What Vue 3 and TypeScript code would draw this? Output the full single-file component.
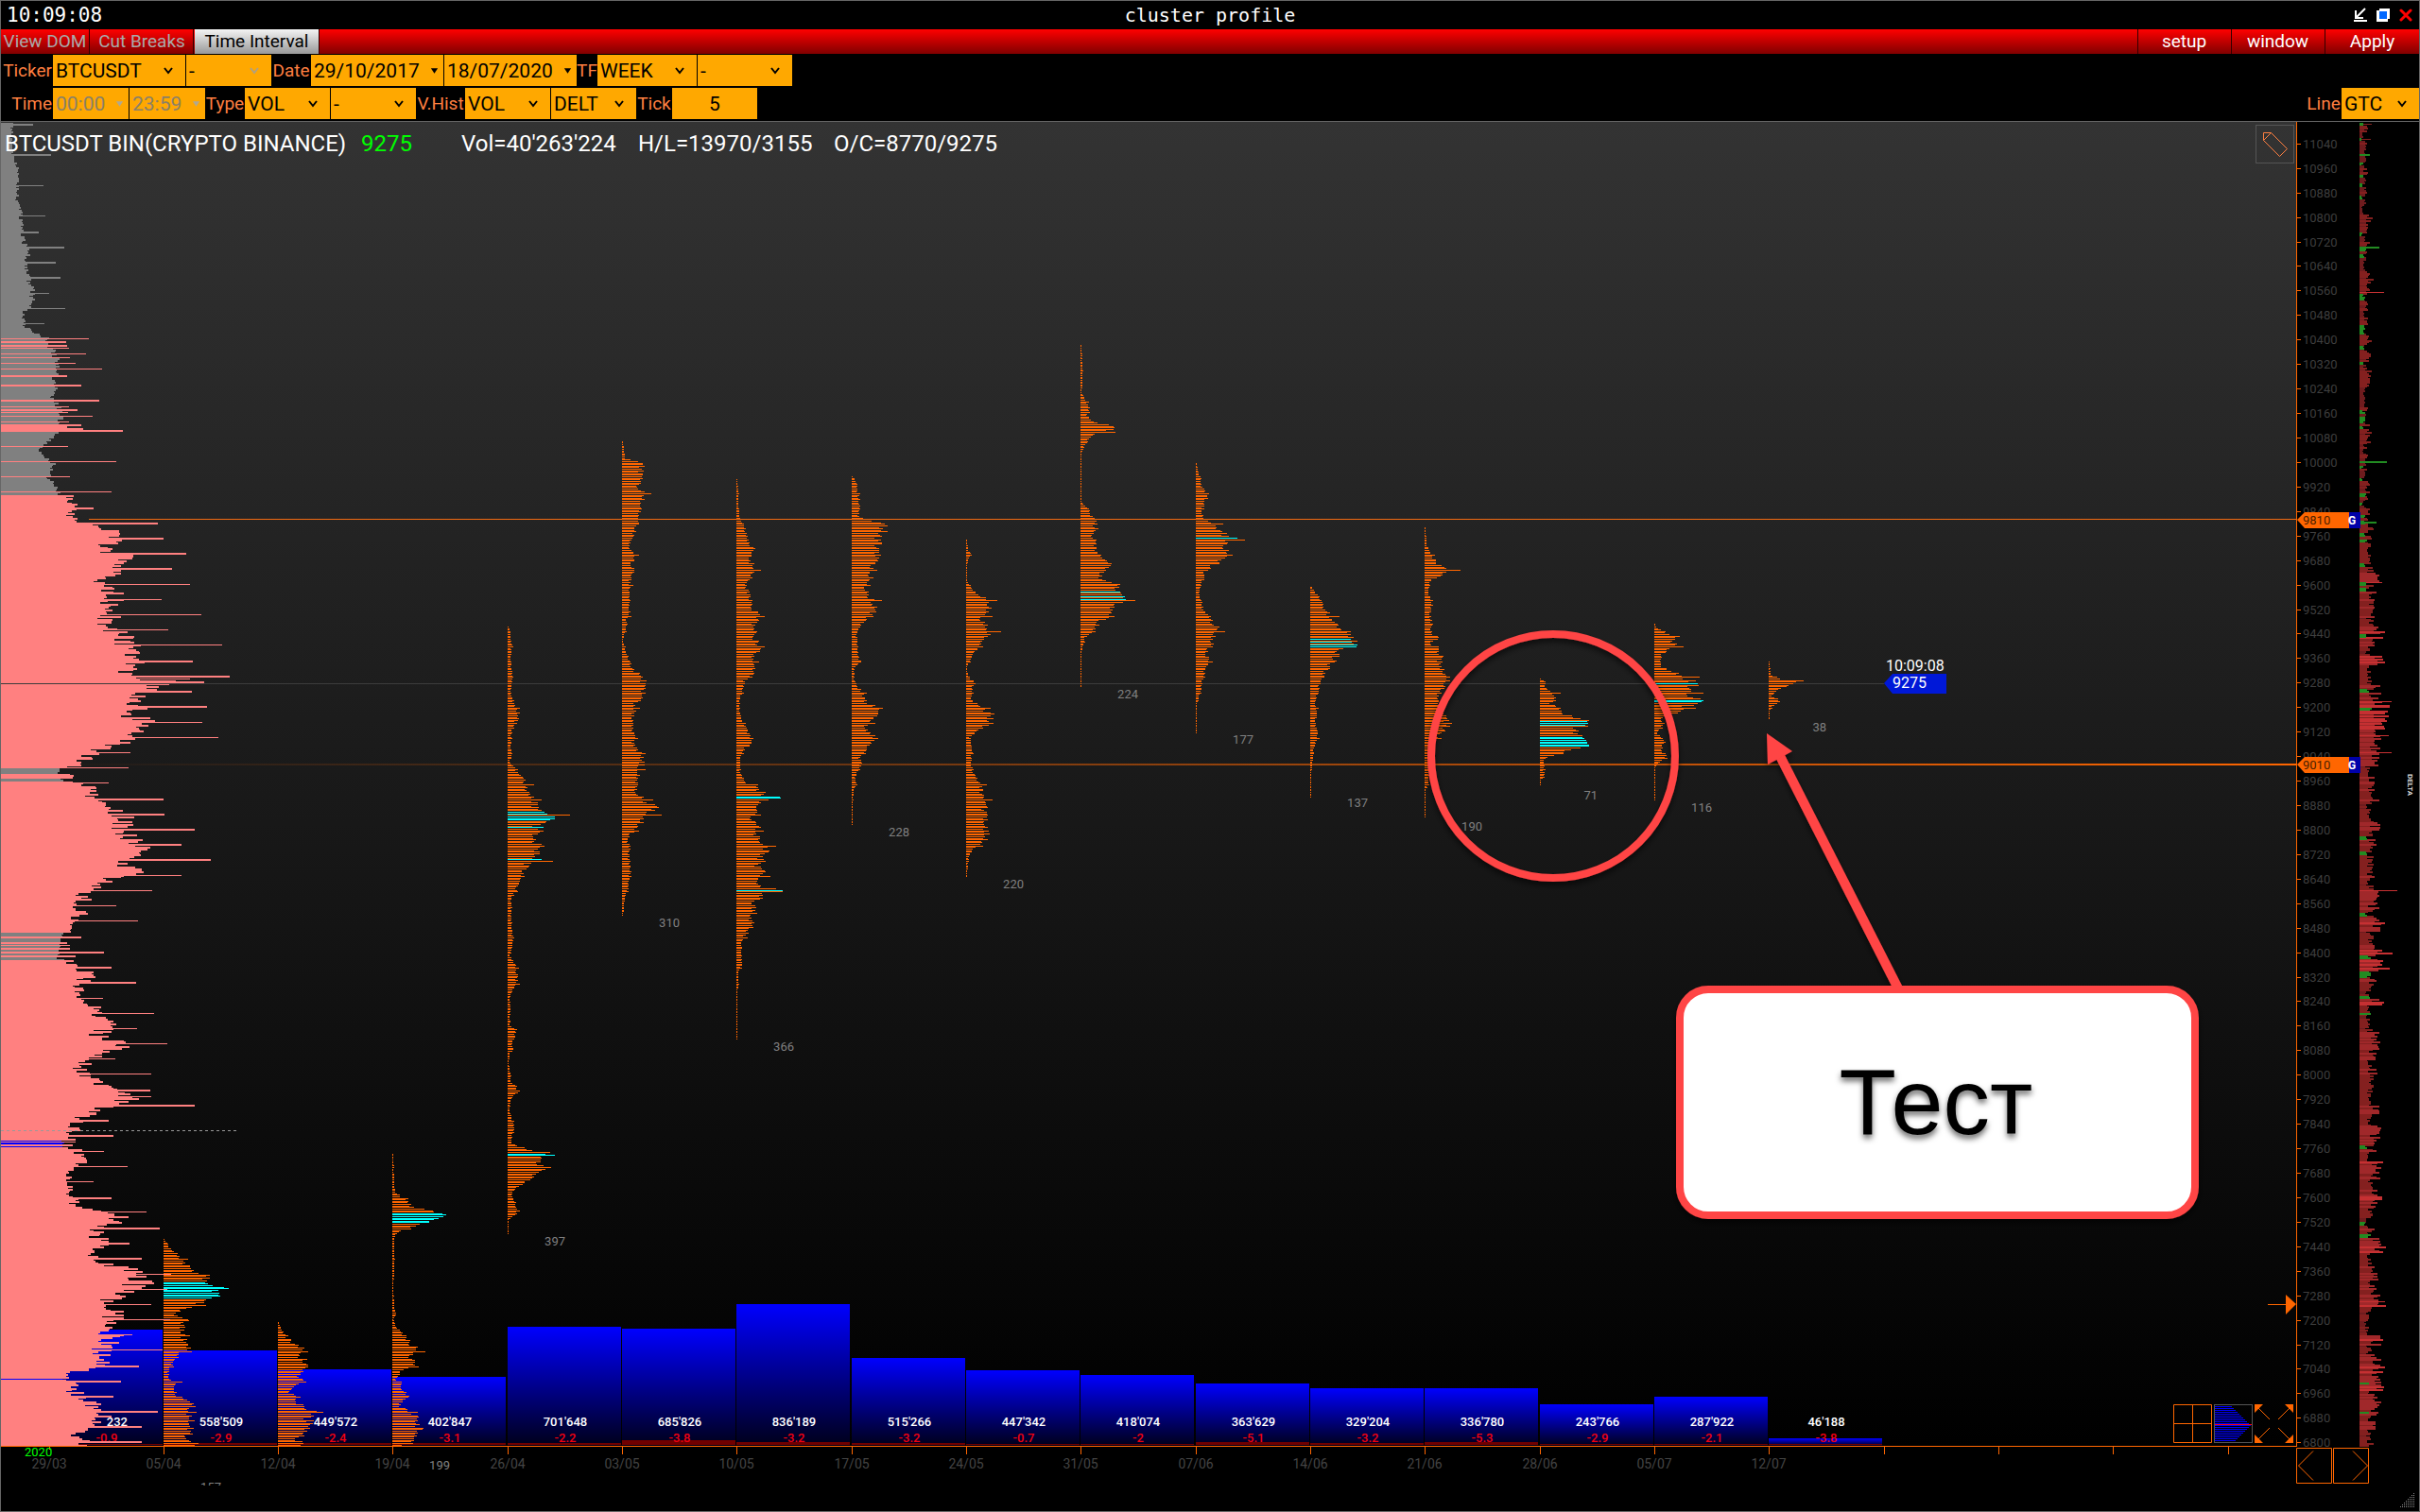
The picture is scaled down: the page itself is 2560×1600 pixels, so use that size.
<script setup lang="ts">
import { ref } from 'vue'

type Point = [number, number]
interface Column {
  date: string
  volume: string
  delta: string
  top: number
  strip: number
  count: string
  countY: number
  shape: Point[]
  hot: [number, number][]
}

const FIRST_X = 172.6
const STEP = 121.34
const BASE_Y = 1530
const TOP_Y = 129
const ROW = 1.6209

const ticker = ref('BTCUSDT')
const dateFrom = ref('29/10/2017')
const dateTo = ref('18/07/2020')
const timeFrom = ref('00:00')
const timeTo = ref('23:59')
const tick = ref('5')

const priceY = (price: number): number => 1526.3 - ((price - 6800) / 5) * ROW
const colX = (k: number): number => Math.round(FIRST_X + STEP * k)

function noise(n: number): number {
  const v = Math.sin(n * 12.9898 + 4.1) * 43758.5453
  return v - Math.floor(v)
}

function sample(points: Point[], y: number): number {
  for (let i = 1; i < points.length; i++) {
    const [y0, w0] = points[i - 1]
    const [y1, w1] = points[i]
    if (y <= y1) return w0 + ((w1 - w0) * Math.max(0, y - y0)) / (y1 - y0)
  }
  return points[points.length - 1][1]
}

function parse(text: string): Point[] {
  return text.trim().split(/\s+/).map((p) => p.split(':').map(Number) as Point)
}

const bar = (x: number, y: number, w: number, h = 1): string => `M${x} ${y}h${w}v${h}h${-w}z`

const columns: Column[] = [
  { date: '05/04', volume: "558'509", delta: '-2.9', top: 1429, strip: 2, count: '157', countY: 1578, hot: [[1356, 1374]],
    shape: parse('1311:1 1320:7 1330:17 1335:20 1341:28 1348:40 1356:44 1360:50 1363:68 1366:50 1369:62 1373:52 1375:38 1380:36 1385:22 1390:10 1395:22 1402:20 1410:20 1418:23 1428:25 1432:15 1436:14 1440:12 1445:8 1450:5 1458:5 1462:13 1467:10 1472:12 1478:15 1483:31 1490:28 1500:30 1510:27 1518:26 1523:22 1530:36') },
  { date: '12/04', volume: "449'572", delta: '-2.4', top: 1449, strip: 2, count: '', countY: 0, hot: [],
    shape: parse('1398:1 1406:3 1412:7 1420:15 1428:27 1436:25 1443:32 1449:26 1455:20 1460:25 1465:18 1472:10 1476:20 1483:18 1488:30 1493:36 1500:32 1507:35 1513:28 1518:25 1523:20 1530:27') },
  { date: '19/04', volume: "402'847", delta: '-3.1', top: 1457, strip: 2, count: '199', countY: 1555, hot: [[1283, 1293]],
    shape: parse('1221:1 1255:2 1262:4 1268:12 1275:18 1280:33 1285:55 1290:45 1296:28 1300:15 1304:5 1310:2 1340:2 1360:1 1385:2 1390:5 1395:1 1403:3 1410:10 1420:18 1428:26 1436:20 1443:27 1450:8 1455:8 1459:3 1462:8 1470:10 1476:17 1482:10 1488:8 1493:18 1498:28 1503:25 1510:28 1518:27 1525:20 1530:8') },
  { date: '26/04', volume: "701'648", delta: '-2.2', top: 1404, strip: 2, count: '397', countY: 1318, hot: [[859, 861], [863, 867], [875, 876], [909, 910], [1221, 1223]],
    shape: parse('662:1 670:3 684:4 700:3 717:5 735:3 745:8 757:12 765:8 775:4 790:3 800:4 806:2 812:7 820:14 830:20 840:22 850:28 857:32 862:44 866:50 869:38 874:32 876:42 878:30 888:30 900:33 908:28 910:42 912:22 920:17 930:13 940:10 950:4 960:4 975:3 985:5 995:5 1003:5 1010:2 1020:8 1030:10 1040:9 1048:5 1055:2 1065:3 1075:2 1085:3 1090:8 1100:6 1105:4 1110:6 1115:2 1125:1 1135:3 1145:3 1150:10 1155:12 1160:5 1165:3 1175:2 1185:5 1195:7 1203:4 1210:5 1215:20 1220:32 1222:47 1225:35 1230:33 1235:38 1240:30 1245:25 1252:15 1258:8 1265:4 1272:8 1280:12 1285:8 1290:1 1305:1') },
  { date: '03/05', volume: "685'826", delta: '-3.8', top: 1406, strip: 5, count: '310', countY: 981, hot: [],
    shape: parse('466:1 478:2 485:3 488:20 495:21 505:18 515:18 520:24 530:20 545:18 550:17 565:12 575:7 580:8 588:14 595:10 603:12 612:9 620:8 630:8 640:7 650:8 655:4 662:5 670:3 678:1 690:4 700:8 708:12 714:19 720:22 730:22 738:20 745:14 755:12 765:10 775:12 785:12 795:17 805:22 815:18 825:15 835:14 845:22 850:28 855:36 860:30 866:24 873:18 878:15 882:8 890:6 900:8 910:7 920:9 930:7 940:6 950:3 968:1') },
  { date: '10/05', volume: "836'189", delta: '-3.2', top: 1380, strip: 3, count: '366', countY: 1112, hot: [[843, 844], [941, 942]],
    shape: parse('507:1 520:2 535:2 545:3 553:6 562:10 572:12 580:18 590:14 600:18 610:16 618:10 625:12 635:15 645:18 652:24 660:18 670:20 680:20 688:24 695:16 705:18 712:18 720:8 728:8 740:3 750:3 760:5 770:10 780:16 785:17 792:8 802:4 815:4 822:6 828:12 835:24 841:30 843:45 844:45 846:26 858:22 865:14 872:25 880:18 890:28 900:32 905:28 915:22 922:28 930:24 939:26 941:49 942:49 944:26 950:24 955:17 965:20 970:15 978:17 985:12 995:6 1005:5 1015:5 1022:6 1028:2 1040:2 1050:1 1099:1') },
  { date: '17/05', volume: "515'266", delta: '-3.2', top: 1437, strip: 2, count: '228', countY: 885, hot: [],
    shape: parse('503:1 512:5 520:6 530:8 540:7 547:8 550:18 555:35 560:36 565:28 570:27 580:29 590:25 600:22 610:20 620:15 630:18 640:25 648:22 655:15 662:8 670:5 678:5 690:7 700:9 706:3 715:2 725:5 733:12 742:14 748:26 755:25 762:18 772:15 780:23 788:17 795:14 800:8 808:10 815:8 820:4 830:4 835:2 850:1 872:1') },
  { date: '24/05', volume: "447'342", delta: '-0.7', top: 1450, strip: 1, count: '220', countY: 940, hot: [],
    shape: parse('571:1 582:2 586:6 592:2 600:1 615:1 620:4 628:10 634:25 640:26 648:22 655:16 662:22 668:26 676:18 684:16 690:8 697:5 705:1 715:2 722:9 732:6 740:5 746:15 752:22 757:28 765:24 772:12 780:4 795:6 805:5 815:7 822:10 830:18 838:16 850:20 860:20 870:20 880:22 888:20 892:16 900:6 910:2 928:1') },
  { date: '31/05', volume: "418'074", delta: '-2', top: 1455, strip: 1, count: '224', countY: 739, hot: [[625, 626], [630, 631], [633, 634]],
    shape: parse('364:1 390:2 400:2 415:1 422:5 430:8 435:9 440:6 445:12 449:28 453:33 456:31 460:12 466:8 472:3 480:1 505:1 530:1 537:6 545:12 550:15 556:14 560:18 566:12 575:15 582:15 590:20 595:30 600:28 606:20 612:20 617:35 622:38 628:42 634:46 638:36 643:36 650:27 655:24 660:18 668:12 674:5 680:4 684:2 690:1 727:1') },
  { date: '07/06', volume: "363'629", delta: '-5.1', top: 1464, strip: 3, count: '177', countY: 787, hot: [[568, 569]],
    shape: parse('489:1 497:2 507:5 515:6 520:10 525:12 532:8 540:6 548:7 552:18 560:24 566:32 568:42 569:42 572:35 578:31 584:33 590:28 594:28 598:18 605:8 612:8 620:4 628:3 638:6 645:8 652:14 660:20 668:24 675:18 683:16 690:10 700:14 706:10 715:8 722:6 730:5 738:3 745:1 775:1') },
  { date: '14/06', volume: "329'204", delta: '-3.2', top: 1469, strip: 2, count: '137', countY: 854, hot: [[675, 676], [679, 680], [682, 684]],
    shape: parse('620:1 625:4 633:10 640:13 648:18 655:24 662:30 668:33 674:40 680:46 684:50 688:32 695:27 705:20 715:14 722:12 730:8 738:6 745:5 755:7 765:4 775:8 785:6 792:3 800:3 820:1 843:1') },
  { date: '21/06', volume: "336'780", delta: '-5.3', top: 1469, strip: 3, count: '190', countY: 879, hot: [],
    shape: parse('558:1 575:2 582:5 590:9 597:15 603:29 608:18 615:5 625:4 640:8 650:5 660:8 667:6 675:14 680:5 685:12 692:18 700:15 710:20 718:26 724:22 732:15 742:14 750:15 760:22 766:26 774:18 780:14 790:5 800:4 810:4 820:5 830:4 835:1 865:1') },
  { date: '28/06', volume: "243'766", delta: '-2.9', top: 1486, strip: 1, count: '71', countY: 846, hot: [[763, 767], [779, 789]],
    shape: parse('718:1 722:6 728:6 732:14 738:20 744:12 750:18 757:30 763:48 767:49 771:35 776:38 780:45 785:50 790:50 793:35 797:20 802:5 808:4 815:4 822:4 826:1 831:1') },
  { date: '05/07', volume: "287'922", delta: '-2.1', top: 1478, strip: 1, count: '116', countY: 859, hot: [[722, 724], [740, 743]],
    shape: parse('659:1 664:2 668:10 673:24 678:18 683:22 688:14 692:8 700:6 706:8 709:18 714:28 719:38 723:45 728:34 735:36 740:52 743:47 748:30 753:24 760:8 770:8 775:3 785:10 795:8 802:14 806:5 812:1 847:1') },
  { date: '12/07', volume: "46'188", delta: '-3.8', top: 1522, strip: 1, count: '38', countY: 774, hot: [],
    shape: parse('700:1 710:2 714:3 718:12 720:32 722:36 724:20 728:14 733:5 736:3 740:10 743:12 747:3 755:1 761:1') },
]

const rows: { i: number; y: number }[] = []
for (let i = 0; i < 900; i++) {
  const y = Math.round(1528.5 - i * ROW)
  if (y < TOP_Y) break
  rows.push({ i, y })
}

/* Weekly clusters, one bar per five points of price */
const profiles = columns.map((c, k) => {
  const x = colX(k)
  let plain = ''
  let hot = ''
  const first = c.shape[0][0]
  const last = c.shape[c.shape.length - 1][0]
  for (const { i, y } of rows) {
    if (y < first || y > last) continue
    const isHot = c.hot.some(([a, b]) => y >= a && y <= b)
    const base = sample(c.shape, y)
    const round = i % 10 === 1 && !isHot ? 1.3 : 1
    const w = Math.max(1, Math.round(base * round * (isHot ? 0.97 + noise(i + k * 977) * 0.1 : 0.82 + noise(i + k * 977) * 0.36)))
    if (isHot) hot += bar(x, y, w)
    else plain += bar(x, y, w)
  }
  return { plain, hot }
})

/* Total volume by price */
const totalShape = parse(
  '128:16 135:13 165:14 180:20 200:19 215:19 222:22 240:24 255:25 262:33 275:29 290:31 300:34 310:37 320:34 332:25 345:28 352:42 356:52 370:60 390:62 400:58 410:62 420:55 430:64 450:66 458:62 465:52 476:42 490:58 505:52 515:62 522:64 524:75 535:78 545:76 550:88 556:118 570:122 580:115 590:138 600:135 610:118 618:112 625:125 640:122 665:118 668:142 680:140 690:150 700:145 710:145 718:170 722:188 726:158 745:152 755:148 765:155 775:150 785:140 792:115 800:95 806:85 809:80 811:64 816:66 818:74 822:75 824:66 826:67 828:92 840:105 850:108 855:122 865:135 880:138 890:150 900:150 910:138 920:150 927:135 935:105 945:92 955:90 965:88 975:82 985:78 988:65 1014:64 1016:74 1022:90 1030:100 1040:92 1050:80 1055:78 1065:100 1075:115 1085:115 1095:110 1105:130 1112:122 1120:93 1130:90 1137:92 1145:115 1155:130 1165:142 1170:120 1180:96 1185:82 1195:86 1198:76 1200:66 1213:68 1215:80 1222:98 1230:90 1235:80 1245:75 1255:77 1265:74 1272:85 1280:100 1285:128 1295:120 1300:108 1310:110 1315:115 1325:105 1335:110 1343:140 1355:155 1365:140 1375:120 1382:125 1395:125 1402:108 1408:120 1415:125 1425:112 1440:120 1446:110 1450:80 1457:73 1459:69 1461:76 1470:80 1480:90 1490:112 1500:118 1510:100 1518:85 1525:92 1530:100',
)
const peaks = parse(
  '131:35 163:54 196:46 228:48 245:41 261:68 277:59 293:64 310:52 326:69 342:47 358:94 361:70 365:71 368:73 374:91 378:74 384:80 390:108 397:71 407:86 423:105 430:73 433:82 436:72 440:98 446:73 449:86 451:71 453:88 455:130 472:72 488:123 504:74 520:118 537:99 553:167 569:173 585:197 601:182 618:201 634:171 650:213 666:178 682:235 699:204 715:243 718:201 721:216 731:203 747:219 764:214 780:231 796:138 812:136 828:115 845:173 861:174 877:206 893:192 909:223 926:192 942:161 958:123 974:146 991:86 997:71 1000:74 1003:74 1007:110 1011:80 1023:118 1039:144 1056:109 1072:163 1088:145 1104:177 1120:122 1136:160 1153:159 1160:160 1169:206 1185:115 1201:120 1203:72 1205:80 1208:80 1211:77 1218:110 1234:135 1250:99 1267:118 1282:155 1299:169 1315:137 1331:150 1348:181 1364:177 1380:160 1396:180 1412:140 1428:172 1445:147 1461:128 1477:120 1493:167 1509:150 1525:150',
)
const total = (() => {
  const out = { gray: '', pink: '', blue: '' }
  const paint = (y: number, w: number, h: number): void => {
    const key = w >= 70 ? 'pink' : y > 1190 ? 'blue' : 'gray'
    out[key] += bar(1, y, w - 1, h)
  }
  for (const { i, y } of rows) {
    const base = sample(totalShape, y)
    const swing = base < 70 && y > 380 ? 0.06 : 0.14
    let w = Math.round(base * (1 - swing / 2 + (noise(i * 3.7) - 0.35) * swing * 1.6))
    if (base < 70) w = Math.min(w, 69)
    if (base >= 72) w = Math.max(w, 70)
    paint(y, w, 2)
  }
  return out
})()
const peakPath = (() => {
  let gray = ''
  let pink = ''
  peaks.forEach(([y, w]) => {
    if (w >= 70) pink += bar(1, y, w - 1, 1 + (y % 2))
    else gray += bar(1, y, w - 1, 1 + (y % 2))
  })
  return { gray, pink }
})()

/* Delta by price, brighter as the imbalance grows */
const deltaShape = parse('129:9 200:9 300:13 400:12 530:12 580:18 620:23 660:21 700:24 730:30 755:28 790:26 824:16 850:20 870:22 900:24 1000:26 1100:22 1200:23 1300:24 1365:28 1400:20 1450:26 1490:20 1530:20')
const deltaPeaks: [number, number, boolean][] = [[131, 13, false], [147, 12, false], [163, 11, true], [261, 21, true], [309, 26, false], [488, 29, true], [552, 18, true], [616, 24, false], [742, 34, false], [746, 32, false], [778, 31, false], [796, 34, false], [942, 40, false], [1072, 12, true], [1377, 27, false], [1463, 10, true], [1494, 10, true]]
const deltaBars = (() => {
  const tones = ['', '', '', '']
  let green = ''
  for (const { i, y } of rows) {
    const wave = 0.4 + noise(Math.floor(i / 6) * 5.3) * 0.6
    const isGreen = noise(Math.floor(i / 2) * 9.1) < (y < 580 ? 0.22 : 0.07)
    const w = Math.max(2, Math.round(sample(deltaShape, y) * wave * (0.55 + noise(i * 2.3) * 0.6) * (i % 10 === 1 ? 1.3 : 1)))
    if (isGreen) green += bar(2496, y, Math.max(2, Math.round(w * 0.5)), 2)
    else tones[Math.min(3, Math.floor(w / 8))] += bar(2496, y, w, 2)
  }
  for (const [y, w, isGreen] of deltaPeaks) {
    if (isGreen) green += bar(2496, y, w, 2)
    else tones[Math.min(3, Math.floor(w / 8))] += bar(2496, y, w, 1)
  }
  return { tones, green }
})()
const deltaTones = ['#6e1c1e', '#84201f', '#a0282a', '#c63032']

const priceLabels = Array.from({ length: 54 }, (_, n) => 6800 + n * 80)
const timeTicks = Array.from({ length: 19 }, (_, k) => k)
const miniRows = Array.from({ length: 19 }, (_, n) => ({ y: 2 + n * 2, w: 38 - Math.abs(n - 10) * 2 }))
const gripDots = Array.from({ length: 8 }, (_, r) => Array.from({ length: r + 1 }, (_, c) => ({ x: 2553 - c * 2, y: 1580 + r * 2 }))).flat()
</script>

<template>
  <main class="window">
    <header class="titlebar">
      <time class="clock">10:09:08</time>
      <h1>cluster profile</h1>
      <div class="window-buttons">
        <button type="button" aria-label="Minimize">
          <svg viewBox="0 0 16 16"><path d="M13 1 4 10M3 3v8h8" fill="none" stroke="#fff" stroke-width="2" /><path d="M1 14h14" stroke="#fff" stroke-width="2" /></svg>
        </button>
        <button type="button" aria-label="Restore">
          <svg viewBox="0 0 16 16"><path d="M4 1h11v11h-2v3H1V3h3z" fill="#fff" /><path d="M4 4h8v8H4z" fill="#0068ff" /></svg>
        </button>
        <button type="button" aria-label="Close">
          <svg viewBox="0 0 16 16"><path d="m3 3 10 10M13 3 3 13" fill="none" stroke="red" stroke-width="3" stroke-linecap="round" /></svg>
        </button>
      </div>
    </header>

    <nav class="menu">
      <button type="button" class="dim view">View DOM</button>
      <button type="button" class="dim cut">Cut Breaks</button>
      <button type="button" class="active">Time Interval</button>
      <span class="spring"></span>
      <button type="button" class="side">setup</button>
      <button type="button" class="side">window</button>
      <button type="button" class="side">Apply</button>
    </nav>

    <section class="controls">
      <div class="row">
        <label class="lead" for="ticker">Ticker</label>
        <span class="pick w140"><select id="ticker" v-model="ticker"><option>BTCUSDT</option></select><svg viewBox="0 0 10 8"><path d="m1 1 4 5 4-5" /></svg></span>
        <span class="pick w90 faded"><select aria-label="Second ticker"><option>-</option></select><svg viewBox="0 0 10 8"><path d="m1 1 4 5 4-5" /></svg></span>
        <label class="w40" for="from">Date</label>
        <span class="pick date w140"><input id="from" v-model="dateFrom" type="text"><svg viewBox="0 0 10 8"><path d="M1 1h8L5 7z" /></svg></span>
        <span class="pick date w140"><input v-model="dateTo" type="text" aria-label="End date"><svg viewBox="0 0 10 8"><path d="M1 1h8L5 7z" /></svg></span>
        <label class="w20" for="frame">TF</label>
        <span class="pick w105"><select id="frame"><option>WEEK</option></select><svg viewBox="0 0 10 8"><path d="m1 1 4 5 4-5" /></svg></span>
        <span class="pick w100"><select aria-label="Second time frame"><option>-</option></select><svg viewBox="0 0 10 8"><path d="m1 1 4 5 4-5" /></svg></span>
      </div>
      <div class="row">
        <label class="lead" for="tfrom">Time</label>
        <span class="pick date w80 off"><input id="tfrom" v-model="timeFrom" type="text" disabled><svg viewBox="0 0 10 8"><path d="M1 1h8L5 7z" /></svg></span>
        <span class="pick date w80 off"><input v-model="timeTo" type="text" disabled aria-label="End time"><svg viewBox="0 0 10 8"><path d="M1 1h8L5 7z" /></svg></span>
        <label class="w40" for="type">Type</label>
        <span class="pick w90"><select id="type"><option>VOL</option></select><svg viewBox="0 0 10 8"><path d="m1 1 4 5 4-5" /></svg></span>
        <span class="pick w90"><select aria-label="Second type"><option>-</option></select><svg viewBox="0 0 10 8"><path d="m1 1 4 5 4-5" /></svg></span>
        <label class="w50" for="hist">V.Hist</label>
        <span class="pick w90"><select id="hist"><option>VOL</option></select><svg viewBox="0 0 10 8"><path d="m1 1 4 5 4-5" /></svg></span>
        <span class="pick w90"><select aria-label="Second histogram"><option>DELT</option></select><svg viewBox="0 0 10 8"><path d="m1 1 4 5 4-5" /></svg></span>
        <label class="w36" for="tick">Tick</label>
        <span class="pick w90"><input id="tick" v-model="tick" class="center" type="text"></span>
        <span class="spring"></span>
        <label class="w36" for="line">Line</label>
        <span class="pick w82"><select id="line"><option>GTC</option></select><svg viewBox="0 0 10 8"><path d="m1 1 4 5 4-5" /></svg></span>
      </div>
    </section>

    <section class="stage">
      <svg class="chart" viewBox="1 129 2558 1470" role="img" aria-label="BTCUSDT cluster profile">
        <defs>
          <linearGradient id="back" x1="0" y1="0" x2="0" y2="1"><stop offset="0" stop-color="#333" /><stop offset="1" stop-color="#000" /></linearGradient>
          <linearGradient id="volume" x1="0" y1="0" x2="0" y2="1"><stop offset="0" stop-color="#00f" /><stop offset="1" stop-color="#00001a" /></linearGradient>
          <linearGradient id="level" gradientUnits="userSpaceOnUse" x1="78" y1="0" x2="2429" y2="0"><stop offset="0" stop-color="#f60" stop-opacity="0.02" /><stop offset="1" stop-color="#f60" /></linearGradient>
          <filter id="shadow" x="-20%" y="-20%" width="140%" height="140%"><feDropShadow dx="0" dy="4" stdDeviation="3" flood-color="#000" flood-opacity="0.6" /></filter>
          <clipPath id="footer"><rect x="0" y="129" width="2560" height="1443" /></clipPath>
        </defs>
        <g shape-rendering="crispEdges">
          <rect x="1" y="129" width="2428" height="1401" fill="url(#back)" />
          <rect x="1" y="723" width="1992" height="1" fill="#3c3c3c" />
          <rect x="52" y="1407" width="120" height="123" fill="url(#volume)" />
          <rect x="52" y="1528" width="120" height="1" fill="#700000" />
          <g v-for="(c, k) in columns" :key="c.date">
            <rect :x="colX(k)" :y="c.top" width="120" :height="BASE_Y - c.top" fill="url(#volume)" />
            <rect :x="colX(k)" :y="1529 - c.strip" width="120" :height="c.strip" fill="#700000" />
          </g>
        </g>

        <g class="volumes">
          <text x="135" y="1509" text-anchor="end" class="cut-off">232</text>
          <text x="113" y="1526" class="minus">-0.9</text>
        </g>
        <g shape-rendering="crispEdges">
          <rect x="78" y="808" width="2351" height="2" fill="url(#level)" />
          <g v-for="(p, k) in profiles" :key="k">
            <path :d="p.plain" fill="#f60" />
            <path :d="p.hot" fill="#0ff" />
          </g>
          <rect x="94" y="549" width="2335" height="1" fill="#f26a12" />
          <path :d="total.gray" fill="#808080" />
          <path :d="total.blue" fill="#00f" />
          <path :d="total.pink" fill="#ff8080" />
          <path :d="peakPath.gray" fill="#808080" />
          <path :d="peakPath.pink" fill="#ff8080" />
          <rect x="1" y="723" width="180" height="1" fill="#3c3c3c" />
          <path d="M1 1196.500h250" stroke="#999" stroke-dasharray="3 3" />
        </g>
        <g class="volumes">
          <template v-for="(c, k) in columns" :key="c.date">
            <text :x="colX(k) + 61" y="1509">{{ c.volume }}</text>
            <text :x="colX(k) + 61" y="1526" class="minus">{{ c.delta }}</text>
          </template>
        </g>
        <g class="counts" clip-path="url(#footer)">
          <text v-for="(c, k) in columns" :key="c.date" :x="colX(k) + 61" :y="c.countY">{{ c.count }}</text>
        </g>

        <g shape-rendering="crispEdges" fill="#f60">
          <rect x="1" y="1530" width="2429" height="1" />
          <rect x="2429" y="129" width="1" height="1401" />
          <rect x="52" y="1530" width="1" height="4" />
          <rect v-for="k in timeTicks" :key="k" :x="colX(k)" y="1531" width="1" height="8" />
          <rect v-for="p in priceLabels" :key="p" x="2430" :y="Math.round(priceY(p))" width="4" height="1" />
        </g>
        <g class="dates">
          <text x="52" y="1554">29/03</text>
          <text v-for="(c, k) in columns" :key="c.date" :x="colX(k)" y="1554">{{ c.date }}</text>
        </g>
        <text x="26" y="1541" class="year">2020</text>
        <g class="prices">
          <text v-for="p in priceLabels" :key="p" x="2436" :y="Math.round(priceY(p)) + 5">{{ p }}</text>
        </g>

        <g shape-rendering="crispEdges">
          <path v-for="(d, n) in deltaBars.tones" :key="n" :d="d" :fill="deltaTones[n]" />
          <path :d="deltaBars.green" fill="#228b22" />
        </g>
        <text class="delta" transform="translate(2547 819) rotate(90)">DELTA</text>

        <g v-for="tag in [{ y: 542, p: '9810' }, { y: 801, p: '9010' }]" :key="tag.p" class="tag">
          <path :d="`M2430 ${tag.y + 8}l8-8h47v17h-47z`" fill="#f60" />
          <rect x="2485" :y="tag.y" width="12" height="17" fill="#00a" />
          <text x="2436" :y="tag.y + 13">{{ tag.p }}</text>
          <text x="2484" :y="tag.y + 13" class="g">G</text>
        </g>

        <path d="M2399 1380.500h20" stroke="#f60" /><path d="m2418 1370 11 10-11 11z" fill="#f60" />
        <text x="1995" y="710" class="now">10:09:08</text>
        <path d="m1993 723 9-10h57v21h-57z" fill="#0018d8" />
        <text x="2002" y="728" class="now">9275</text>

        <g class="headline">
          <text x="5" y="160">BTCUSDT BIN(CRYPTO BINANCE)</text>
          <text x="382" y="160" class="last">9275</text>
          <text x="488" y="160">Vol=40'263'224</text>
          <text x="675" y="160">H/L=13970/3155</text>
          <text x="882" y="160">O/C=8770/9275</text>
        </g>

        <g filter="url(#shadow)">
          <circle cx="1643" cy="800" r="129" fill="none" stroke="#ff4444" stroke-width="8" />
          <path d="M1883 800 2009 1048" stroke="#ff4444" stroke-width="10" />
          <path d="m1869 776 27 19-26 14z" fill="#ff4444" />
          <rect x="1777" y="1047" width="545" height="239" rx="30" fill="#fff" stroke="#ff4444" stroke-width="8" />
        </g>
        <text x="2048" y="1200" class="note">Тест</text>
        <g fill="#8c8c8c" shape-rendering="crispEdges">
          <rect v-for="(d, n) in gripDots" :key="n" :x="d.x" :y="d.y" width="1" height="1" />
        </g>
      </svg>

      <button type="button" class="tool marker" aria-label="Marker">
        <svg viewBox="0 0 41 41"><rect x="0.500" y="0.500" width="40" height="40" fill="none" stroke="#555" /><path d="M8.500 8.500h8l17 17-8 8-17-17zM8.500 16.500l8-8" fill="none" stroke="#ff7f40" /></svg>
      </button>
      <div class="tools">
        <button type="button" class="tool" aria-label="Grid">
          <svg viewBox="0 0 41 41"><path d="M.5.5h40v40H.5zM20.500 0v41M0 20.500h41" fill="none" stroke="#f60" /></svg>
        </button>
        <button type="button" class="tool" aria-label="Profile">
          <svg viewBox="0 0 41 41" shape-rendering="crispEdges"><path d="M.5.5h40v40H.5z" fill="none" stroke="#555" /><rect v-for="r in miniRows" :key="r.y" x="1" :y="r.y" :width="r.w" height="1" fill="#00f" /><path d="M1 21.500h39" stroke="red" /></svg>
        </button>
        <button type="button" class="tool" aria-label="Full size">
          <svg viewBox="0 0 41 41"><path d="M0 0h9L0 9zM41 0v9l-9-9zM0 41v-9l9 9zM41 41h-9l9-9z" fill="#f60" /><path d="m4 4 12 12M37 4 25 16M4 37l12-12M37 37 25 25" stroke="#f60" /></svg>
        </button>
      </div>
      <div class="pager">
        <button type="button" aria-label="Back"><svg viewBox="0 0 38 38"><path d="M.5.5h37v37H.5zM18 3.500 2.500 19 18 34.500" fill="none" stroke="#f60" /></svg></button>
        <button type="button" aria-label="Forward"><svg viewBox="0 0 38 38"><path d="M.5.5h37v37H.5zM21 3.500 36.500 19 21 34.500" fill="none" stroke="#f60" /></svg></button>
      </div>
    </section>
  </main>
</template>

<style>
body {
  margin: 0;
  background: #000;
}
</style>

<style scoped>
.window {
  border: 1px solid #666;
  background: #000;
  color: #fff;
  font-family: Roboto, "Liberation Sans", sans-serif;
}
button,
input,
select {
  box-sizing: border-box;
  margin: 0;
  padding: 0;
  border: 0;
  border-radius: 0;
  background: none;
  font: inherit;
  color: inherit;
}
svg {
  display: block;
}
.titlebar {
  display: grid;
  grid-template-columns: 1fr auto 1fr;
  align-items: center;
  height: 30px;
  padding: 0 6px;
  font-family: "DejaVu Sans Mono", monospace;
}
.clock {
  font-size: 21px;
  line-height: 30px;
}
.titlebar h1 {
  margin: 0;
  font-size: 20px;
  font-weight: 400;
  line-height: 30px;
}
.window-buttons {
  display: flex;
  justify-content: flex-end;
  gap: 8px;
}
.window-buttons svg {
  width: 16px;
  height: 16px;
}
.menu {
  display: flex;
  gap: 1px;
  height: 26px;
  margin-bottom: 1px;
  background: linear-gradient(#f00, #800000);
  font-size: 19px;
  line-height: 26px;
}
.menu button {
  border-right: 1px solid #300;
}
.menu .dim {
  color: #aaa;
}
.menu .view {
  width: 94px;
}
.menu .cut {
  width: 109px;
}
.menu .active {
  width: 132px;
  background: linear-gradient(#f4f4f4, #989898);
  color: #000;
}
.spring {
  flex: 1;
}
.menu .side {
  width: 98px;
  border-right: 0;
  border-left: 1px solid #300;
}
.menu .side:last-child {
  width: 100px;
}
.controls {
  display: flex;
  flex-direction: column;
  gap: 2px;
  padding-bottom: 2px;
  border-bottom: 1px solid #666;
}
.row {
  display: flex;
  align-items: center;
  gap: 1px;
  height: 33px;
}
.row label {
  display: flex;
  justify-content: center;
  color: #ff7f40;
  font-size: 19px;
  line-height: 32px;
  white-space: nowrap;
}
.row .lead {
  justify-content: flex-end;
  width: 54px;
}
.pick {
  display: grid;
  align-items: center;
  height: 33px;
  background: #ffa800;
  color: #000;
  font-size: 21px;
}
.pick > * {
  grid-area: 1 / 1;
}
.pick select,
.pick input {
  width: 100%;
  height: 33px;
  padding-left: 3px;
  appearance: none;
  opacity: 1;
}
.pick svg {
  justify-self: end;
  width: 10px;
  height: 8px;
  margin-right: 13px;
  pointer-events: none;
}
.pick svg path {
  fill: none;
  stroke: #000;
  stroke-width: 2;
}
.date svg {
  width: 9px;
  margin-right: 5px;
}
.date svg path {
  fill: #000;
  stroke: none;
}
.faded svg path {
  stroke: #b0a080;
}
.off {
  color: #8a8068;
}
.off svg path {
  fill: #b0a890;
}
.pick .center {
  padding: 0;
  text-align: center;
}
.w20 {
  width: 20px;
}
.w36 {
  width: 36px;
}
.w40 {
  width: 40px;
}
.w50 {
  width: 50px;
}
.w80 {
  width: 80px;
}
.w82 {
  width: 82px;
}
.w90 {
  width: 90px;
}
.w100 {
  width: 100px;
}
.w105 {
  width: 105px;
}
.w140 {
  width: 140px;
}
.stage {
  position: relative;
}
.chart {
  width: 100%;
  height: auto;
}
.headline {
  fill: #fff;
  font-size: 24px;
}
.headline .last {
  fill: #0f0;
}
.volumes {
  fill: #fff;
  font-size: 13px;
  font-weight: 500;
  text-anchor: middle;
}
.volumes .minus {
  fill: #f00010;
}
.volumes .cut-off {
  text-anchor: end;
}
.counts {
  fill: #808080;
  font-size: 13px;
  text-anchor: end;
}
.dates {
  fill: #444;
  font-size: 14px;
  text-anchor: middle;
}
.year {
  fill: #0f0;
  font-size: 13px;
}
.prices {
  fill: #3e3e3e;
  font-size: 13px;
}
.tag {
  fill: #4a1e00;
  font-size: 13px;
}
.tag .g {
  fill: #fff;
  font-size: 12px;
  font-weight: 700;
}
.delta {
  fill: #ddd;
  font-size: 8px;
  font-weight: 700;
}
.now {
  fill: #fff;
  font-size: 16px;
}
.note {
  fill: #000;
  font-family: "Liberation Sans", Arial, sans-serif;
  font-size: 99px;
  text-anchor: middle;
  filter: drop-shadow(0 4px 3px rgba(0, 0, 0, 0.6));
}
.tool svg {
  width: 41px;
  height: 41px;
}
.marker {
  position: absolute;
  top: 3px;
  right: 132px;
}
.tools {
  position: absolute;
  right: 133px;
  bottom: 72px;
  display: flex;
  gap: 2px;
}
.pager {
  position: absolute;
  right: 53px;
  bottom: 29px;
  display: flex;
  gap: 1px;
}
.pager svg {
  width: 38px;
  height: 38px;
}
</style>
